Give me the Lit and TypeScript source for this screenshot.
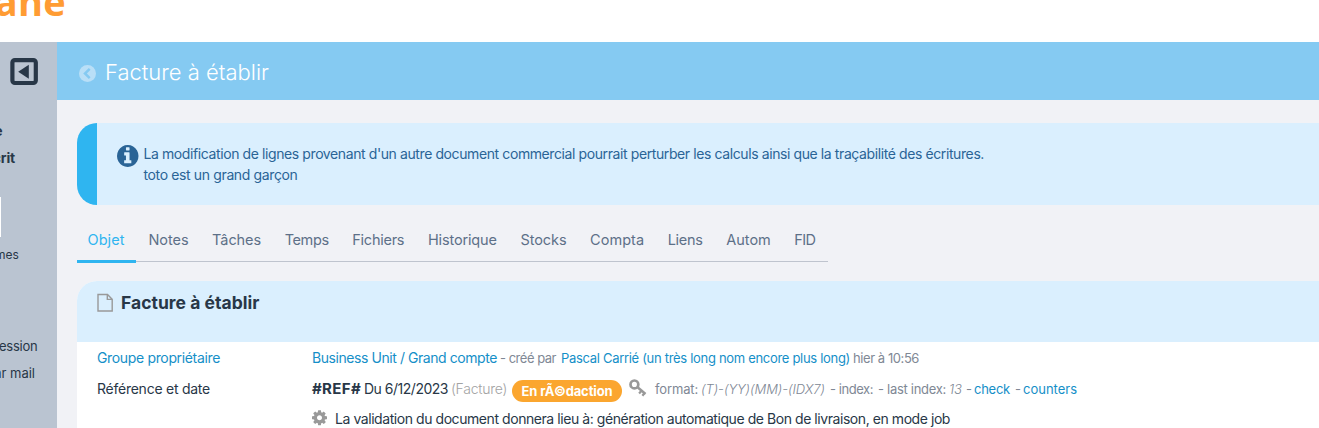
import { LitElement, html, css } from "lit";
import { customElement, property } from "lit/decorators.js";

const GEAR = "M1152 896q0-106-75-181t-181-75-181 75-75 181 75 181 181 75 181-75 75-181zm512-109v222q0 12-8 23t-20 13l-185 28q-19 54-39 91 35 50 107 138 10 12 10 25t-9 23q-27 37-99 108t-94 71q-12 0-26-9l-138-108q-44 23-91 38-16 136-29 186-7 28-36 28h-222q-14 0-24.500-8.500t-11.500-21.500l-28-184q-49-16-90-37l-141 107q-10 9-25 9-14 0-25-11-126-114-165-168-7-10-7-23 0-12 8-23 15-21 51-66.500t54-70.500q-27-50-41-99l-183-27q-13-2-21-12.500t-8-23.500v-222q0-12 8-23t19-13l186-28q14-46 39-92-40-57-107-138-10-12-10-24 0-10 9-23 26-36 98.500-107.500t94.500-71.500q13 0 26 10l138 107q44-23 91-38 16-136 29-186 7-28 36-28h222q14 0 24.500 8.500t11.500 21.500l28 184q49 16 90 37l142-107q9-9 24-9 13 0 25 10 129 119 165 170 7 8 7 22 0 12-8 23-15 21-51 66.500t-54 70.500q26 50 41 98l183 28q13 2 21 12.500t8 23.500z";
const INFO = "M1152 1376v-160q0-14-9-23t-23-9h-96v-512q0-14-9-23t-23-9h-320q-14 0-23 9t-9 23v160q0 14 9 23t23 9h96v320h-96q-14 0-23 9t-9 23v160q0 14 9 23t23 9h448q14 0 23-9t9-23zm-128-896v-160q0-14-9-23t-23-9h-192q-14 0-23 9t-9 23v160q0 14 9 23t23 9h192q14 0 23-9t9-23zm640 416q0 209-103 385.500t-279.500 279.500-385.500 103-385.500-103-279.500-279.500-103-385.500 103-385.500 279.500-279.500 385.500-103 385.500 103 279.500 279.500 103 385.500z";

/* A run of text whose letter spacing is adjusted so it fills a given width. */
@customElement("fit-text")
class FitText extends LitElement {
  @property({ type: Number }) width = 0;
  @property() text = "";
  static styles = css`
    :host { display: block; flex: none; white-space: pre; }
    .run { display: inline-block; }
  `;
  render() {
    return html`<span class="run">${this.text}</span>`;
  }
  updated() {
    const run = this.renderRoot.querySelector(".run") as HTMLElement;
    run.style.letterSpacing = "0px";
    const natural = run.getBoundingClientRect().width;
    const n = [...this.text].length;
    run.style.letterSpacing = (this.width - natural) / n + "px";
    this.style.width = this.width + "px";
  }
}

const fit = (text: string, width: number, cls = "") =>
  html`<fit-text class=${cls} .text=${text} .width=${width}></fit-text>`;

const TABS: [string, number, number][] = [
  ["Objet", 37, 24], ["Notes", 40, 23.6], ["Tâches", 49, 23.6], ["Temps", 44, 23.6],
  ["Fichiers", 52, 23.6], ["Historique", 69, 23.6], ["Stocks", 46, 23.6], ["Compta", 54, 23.6],
  ["Liens", 35, 23.6], ["Autom", 44.5, 23.6], ["FID", 21, 12],
];

@customElement("app-root")
class AppRoot extends LitElement {
  static styles = css`
    :host {
      display: block; height: 428px; overflow: hidden; background: #fff;
      font-family: Inter, "Open Sans", sans-serif; font-size: 14px; line-height: 21px; color: #283747;
    }
    svg { display: block; flex: none; }
    .brand { height: 42px; display: flex; justify-content: flex-end; width: 66px; overflow: hidden; }
    .brand fit-text {
      font: 700 38px/42px "Open Sans", sans-serif; color: #ff9c33; margin-top: -20px;
    }
    .frame { display: flex; height: 386px; }
    .side { width: 57px; flex: none; background: #bac4d1; overflow: hidden; }
    .collapse { padding: 16px 0 0 10px; height: 60px; box-sizing: border-box; }
    .side-list { display: flex; flex-direction: column; }
    .side-row { display: flex; justify-content: flex-end; height: 27px; line-height: 27px; font-size: 13px; }
    .r2 { width: 3px; } .r15 { width: 15px; } .r19 { width: 19px; } .r38 { width: 37.5px; } .r35 { width: 35px; }
    .strong { font-weight: 700; font-size: 14px; }
    .head { padding-top: 15px; }
    .box { width: 1px; height: 40px; background: #fff; margin-top: 26px; }
    .norms-list { padding-top: 4px; }
    .norms { font-size: 12px; }
    .foot { margin-top: 65px; }
    .main { flex: 1; min-width: 0; background: #f1f2f6; }
    .title { display: flex; align-items: center; height: 58px; background: #85caf2; color: #fff; padding-left: 22px; gap: 9px; box-sizing: border-box; }
    .title fit-text { font-size: 22px; line-height: 30px; font-weight: 300; padding-top: 2px; }
    .title svg { margin-top: 4px; }
    .content { padding-left: 20px; }
    .notice {
      margin-top: 23px; height: 82px; box-sizing: border-box; border-left: 20px solid #2fb5f0;
      border-radius: 20px 0 0 20px; background: #daeffe; color: #2a6496;
      display: flex; padding: 20px 0 0 20px; gap: 5px;
    }
    .notice svg { margin-top: 2px; }
    .tabs { display: flex; width: 751px; height: 39px; margin-top: 18px; box-sizing: border-box; border-bottom: 1px solid #bfc4ce; }
    .tab { flex: none; height: 39px; box-sizing: border-box; padding-top: 6px; color: #5d7088; font-size: 14.5px; }
    .active { color: #2fb5f0; border-bottom: 3px solid #2fb5f0; height: 40px; }
    .tab-in { display: flex; }
    .card { margin-top: 19px; border-radius: 20px 0 0 0; overflow: hidden; background: #fff; height: 150px; }
    .card-head { height: 61px; background: #daeffe; display: flex; box-sizing: border-box; padding: 11px 0 0 20px; gap: 8px; font-size: 17.5px; font-weight: 700; }
    .card-head svg { margin-top: 1px; }
    .row { display: flex; padding-left: 20px; box-sizing: border-box; }
    .label { width: 215px; flex: none; }
    .value { display: flex; }
    .first { height: 36px; padding-top: 5px; }
    .second { height: 31px; }
    .third { height: 22px; margin-top: -1px; }
    .gear { margin-top: 1px; }
    .link { color: #158fc8; }
    .muted { color: #808895; }
    .light { color: #a3a3a3; font-weight: 300; }
    .meta { font-size: 13px; margin-top: 1px; }
    .bold { font-weight: 700; font-size: 15px; }
    .italic { font-style: italic; font-weight: 300; }
    .g2 { margin-left: 2px; } .g3 { margin-left: 3px; } .g4 { margin-left: 4px; } .g5 { margin-left: 5px; } .g8 { margin-left: 8px; }
    .pill { width: 110px; height: 22px; border-radius: 11px; background: #fba62f; color: #fff; display: flex; justify-content: center; font-weight: 700; font-size: 13px; line-height: 23px; margin: 2px 0 0 5px; box-sizing: border-box; }
    .key { margin: 1px 0 0 7px; }
  `;
  render() {
    return html`
      <div class="brand">${fit("sellane", 137)}</div>
      <div class="frame">
        <div class="side">
          <div class="collapse">
            <svg width="28" height="28" viewBox="0 0 28 28">
              <rect x="2.400" y="2.100" width="23.400" height="22.900" rx="2.500" fill="none" stroke="#283747" stroke-width="4.200"/>
              <path d="M18.800 6.800v14L8.200 13.700z" fill="#283747"/>
            </svg>
          </div>
          <div class="side-list head">
            <div class="side-row strong r2">${fit("Mode", 40)}</div>
            <div class="side-row strong r15">${fit("Manuscrit", 68)}</div>
          </div>
          <div class="box"></div>
          <div class="side-list norms-list"><div class="side-row norms r19">${fit("Normes", 45)}</div></div>
          <div class="side-list foot">
            <div class="side-row r38">${fit("Impression", 65)}</div>
            <div class="side-row r35">${fit("Par mail", 49)}</div>
          </div>
        </div>
        <div class="main">
          <div class="title">
            <svg width="17" height="17" viewBox="0 0 17 17">
              <circle cx="8.500" cy="8.500" r="8.500" fill="#b9dff7"/>
              <path d="M10.700 3.800L6 8.500l4.700 4.700" fill="none" stroke="#85caf2" stroke-width="2.500"/>
            </svg>
            ${fit("Facture à établir", 164)}
          </div>
          <div class="content">
            <div class="notice">
              <svg width="21.500" height="22" viewBox="128 128 1536 1536" preserveAspectRatio="none"><path d=${INFO} fill="#2a6496"/></svg>
              <div>
                ${fit("La modification de lignes provenant d'un autre document commercial pourrait perturber les calculs ainsi que la traçabilité des écritures.", 840.5)}
                ${fit("toto est un grand garçon", 154)}
              </div>
            </div>
            <div class="tabs">
              ${TABS.map(([name, w, gap], i) => html`<div class="tab ${i ? "" : "active"}" style="padding-left:${i ? (i === 1 ? 13 : 0) : 10.5}px;padding-right:${i ? gap : 11}px"><div class="tab-in">${fit(name, w)}</div></div>`)}
            </div>
            <div class="card">
              <div class="card-head">
                <svg width="16" height="20" viewBox="0 0 16 20"><path d="M1 1.500h9.500l4.700 4.700V18H1zM10.300 1.500v4.900h4.900" fill="none" stroke="#999" stroke-width="1.400"/></svg>
                ${fit("Facture à établir", 138.5)}
              </div>
              <div class="row first">
                <div class="label link">${fit("Groupe propriétaire", 123)}</div>
                <div class="value">
                  ${fit("Business Unit / Grand compte", 185, "link")}
                  ${fit("- créé par", 56, "muted meta g3")}
                  ${fit("Pascal Carrié (un très long nom encore plus long)", 289, "link meta g5")}
                  ${fit("hier à 10:56", 66, "muted meta g3")}
                </div>
              </div>
              <div class="row second">
                <div class="label">${fit("Référence et date", 113)}</div>
                <div class="value">
                  ${fit("#REF#", 49, "bold")}
                  ${fit("Du 6/12/2023", 84, "g3")}
                  ${fit("(Facture)", 56, "light g3")}
                  <div class="pill">${fit("En rÃ©daction", 91)}</div>
                  <svg class="key" width="18" height="18" viewBox="0 0 18 18">
                    <g fill="none" stroke="#999">
                      <circle cx="5.400" cy="5.400" r="3.900" stroke-width="2.700"/>
                      <path d="M8 7.800l8.500 7.200" stroke-width="2.500"/>
                      <path d="M12.700 11.500l-2.600 3M15.600 14l-2.200 2.800" stroke-width="2.200"/>
                    </g>
                  </svg>
                  ${fit("format:", 43, "muted meta g8")}
                  ${fit("(T)-(YY)(MM)-(IDX7)", 124, "muted meta italic g3")}
                  ${fit("- index:", 43, "muted meta g5")}
                  ${fit("- last index:", 68, "muted meta g5")}
                  ${fit("13", 13, "muted meta italic g3")}
                  ${fit("-", 6, "muted meta g4")}
                  ${fit("check", 36, "link meta g2")}
                  ${fit("-", 6, "muted meta g5")}
                  ${fit("counters", 54, "link meta g2")}
                </div>
              </div>
              <div class="row third">
                <div class="label"></div>
                <div class="value">
                  <svg class="gear" width="15" height="17" viewBox="128 0 1536 1741"><path d=${GEAR} fill="#999"/></svg>
                  ${fit("La validation du document donnera lieu à: génération automatique de Bon de livraison, en mode job", 615, "g8")}
                </div>
              </div>
            </div>
          </div>
        </div>
      </div>`;
  }
}
